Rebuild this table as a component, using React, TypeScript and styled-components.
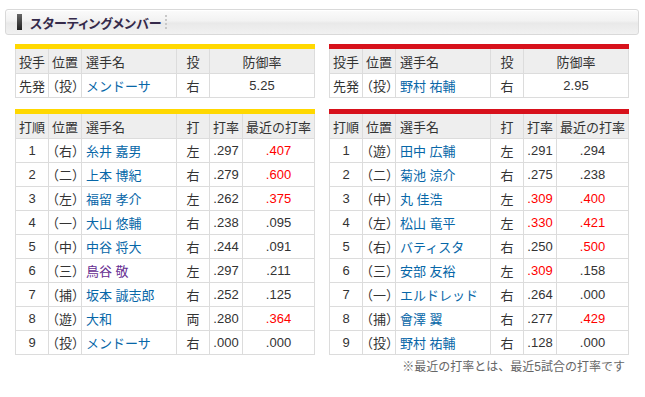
import { styled, createGlobalStyle } from "styled-components";

type Batter = {
  order: number;
  pos: string;
  name: string;
  hand: string;
  avg: string;
  recent: string;
  avgHot?: boolean;
  recentHot?: boolean;
  visited?: boolean;
};

type Team = {
  color: string;
  pitcher: { name: string; hand: string; era: string };
  lineup: Batter[];
};

const tigers: Team = {
  color: "#ffd800",
  pitcher: { name: "メンドーサ", hand: "右", era: "5.25" },
  lineup: [
    { order: 1, pos: "右", name: "糸井 嘉男", hand: "左", avg: ".297", recent: ".407", recentHot: true },
    { order: 2, pos: "二", name: "上本 博紀", hand: "右", avg: ".279", recent: ".600", recentHot: true },
    { order: 3, pos: "左", name: "福留 孝介", hand: "左", avg: ".262", recent: ".375", recentHot: true },
    { order: 4, pos: "一", name: "大山 悠輔", hand: "右", avg: ".238", recent: ".095" },
    { order: 5, pos: "中", name: "中谷 将大", hand: "右", avg: ".244", recent: ".091" },
    { order: 6, pos: "三", name: "鳥谷 敬", hand: "左", avg: ".297", recent: ".211", visited: true },
    { order: 7, pos: "捕", name: "坂本 誠志郎", hand: "右", avg: ".252", recent: ".125" },
    { order: 8, pos: "遊", name: "大和", hand: "両", avg: ".280", recent: ".364", recentHot: true },
    { order: 9, pos: "投", name: "メンドーサ", hand: "右", avg: ".000", recent: ".000" },
  ],
};

const carp: Team = {
  color: "#d7111b",
  pitcher: { name: "野村 祐輔", hand: "右", era: "2.95" },
  lineup: [
    { order: 1, pos: "遊", name: "田中 広輔", hand: "左", avg: ".291", recent: ".294" },
    { order: 2, pos: "二", name: "菊池 涼介", hand: "右", avg: ".275", recent: ".238" },
    { order: 3, pos: "中", name: "丸 佳浩", hand: "左", avg: ".309", recent: ".400", avgHot: true, recentHot: true },
    { order: 4, pos: "左", name: "松山 竜平", hand: "左", avg: ".330", recent: ".421", avgHot: true, recentHot: true },
    { order: 5, pos: "右", name: "バティスタ", hand: "右", avg: ".250", recent: ".500", recentHot: true },
    { order: 6, pos: "三", name: "安部 友裕", hand: "左", avg: ".309", recent: ".158", avgHot: true },
    { order: 7, pos: "一", name: "エルドレッド", hand: "右", avg: ".264", recent: ".000" },
    { order: 8, pos: "捕", name: "會澤 翼", hand: "右", avg: ".277", recent: ".429", recentHot: true },
    { order: 9, pos: "投", name: "野村 祐輔", hand: "右", avg: ".128", recent: ".000" },
  ],
};

const GlobalStyle = createGlobalStyle`
  body {
    margin: 0;
    background: #fff;
    font-family: "Liberation Sans", "Noto Sans CJK JP", sans-serif;
    color: #333;
  }
`;

const Page = styled.div`
  width: 634px;
  padding: 9px 0 0 5px;
`;

const TitleBar = styled.div`
  display: flex;
  align-items: center;
  height: 24px;
  border: 1px solid #d9d9d9;
  border-radius: 3px;
  box-shadow: inset 0 1px 0 #fff;
  background: linear-gradient(#fbfbfb 0%, #f2f2f2 45%, #e9e9e9 55%, #f1f1f1 100%);
`;

const TitleMark = styled.span`
  width: 5px;
  height: 16px;
  margin-left: 11px;
  background: linear-gradient(#666, #222);
`;

const TitleText = styled.h2`
  margin: 0 0 0 8px;
  font-size: 13px;
  font-weight: bold;
  color: #34294a;
  font-feature-settings: "palt";
`;

const TitleDots = styled.span`
  height: 14px;
  margin-left: 4px;
  border-left: 2px dotted #c8c8c8;
`;

const Columns = styled.div`
  display: grid;
  grid-template-columns: 300px 300px;
  column-gap: 14px;
  padding: 9px 10px 0;
`;

const TeamColumn = styled.div`
  display: flex;
  flex-direction: column;
  gap: 11px;
`;

const TableWrap = styled.div<{ $color: string }>`
  border-top: 5px solid ${(p) => p.$color};
`;

const Table = styled.table`
  width: 300px;
  table-layout: fixed;
  border-collapse: separate;
  border-spacing: 0;
  font-size: 13px;
`;

const Th = styled.th<{ $left?: boolean }>`
  padding: 0 ${(p) => (p.$left ? "4px" : "0")};
  height: 24px;
  background: #eeeeee;
  font-weight: normal;
  text-align: ${(p) => (p.$left ? "left" : "center")};
  border-right: 1px solid #dcdcdc;
  border-bottom: 1px solid #dcdcdc;
  white-space: nowrap;
  &:first-child {
    border-left: 1px solid #dcdcdc;
  }
`;

const Td = styled.td<{ $left?: boolean; $hot?: boolean }>`
  padding: 0 ${(p) => (p.$left ? "4px" : "0")};
  height: 23px;
  text-align: ${(p) => (p.$left ? "left" : "center")};
  color: ${(p) => (p.$hot ? "#ff0000" : "#333")};
  border-right: 1px solid #dcdcdc;
  border-bottom: 1px solid #dcdcdc;
  white-space: nowrap;
  &:first-child {
    border-left: 1px solid #dcdcdc;
  }
`;

const PosCell = styled(Td)`
  padding-left: 3px;
  font-feature-settings: "palt";
  letter-spacing: 0.5px;
`;

const PlayerLink = styled.a<{ $visited?: boolean }>`
  color: ${(p) => (p.$visited ? "#662d91" : "#0767a8")};
  text-decoration: none;
`;

const Note = styled.p`
  grid-column: 1 / -1;
  margin: 4px 4px 0 0;
  font-size: 12px;
  line-height: 16px;
  color: #666;
  text-align: right;
`;

function PitcherTable({ team }: { team: Team }) {
  return (
    <TableWrap $color={team.color}>
      <Table>
        <colgroup>
          <col style={{ width: 34 }} />
          <col style={{ width: 33 }} />
          <col style={{ width: 95 }} />
          <col style={{ width: 33 }} />
          <col style={{ width: 105 }} />
        </colgroup>
        <thead>
          <tr>
            <Th>投手</Th>
            <Th>位置</Th>
            <Th $left>選手名</Th>
            <Th>投</Th>
            <Th>防御率</Th>
          </tr>
        </thead>
        <tbody>
          <tr>
            <Td>先発</Td>
            <PosCell $left>（投）</PosCell>
            <Td $left>
              <PlayerLink href="#">{team.pitcher.name}</PlayerLink>
            </Td>
            <Td>{team.pitcher.hand}</Td>
            <Td>{team.pitcher.era}</Td>
          </tr>
        </tbody>
      </Table>
    </TableWrap>
  );
}

function LineupTable({ team }: { team: Team }) {
  return (
    <TableWrap $color={team.color}>
      <Table>
        <colgroup>
          <col style={{ width: 34 }} />
          <col style={{ width: 33 }} />
          <col style={{ width: 95 }} />
          <col style={{ width: 33 }} />
          <col style={{ width: 33 }} />
          <col style={{ width: 72 }} />
        </colgroup>
        <thead>
          <tr>
            <Th>打順</Th>
            <Th>位置</Th>
            <Th $left>選手名</Th>
            <Th>打</Th>
            <Th>打率</Th>
            <Th>最近の打率</Th>
          </tr>
        </thead>
        <tbody>
          {team.lineup.map((b) => (
            <tr key={b.order}>
              <Td>{b.order}</Td>
              <PosCell $left>（{b.pos}）</PosCell>
              <Td $left>
                <PlayerLink href="#" $visited={b.visited}>
                  {b.name}
                </PlayerLink>
              </Td>
              <Td>{b.hand}</Td>
              <Td $hot={b.avgHot}>{b.avg}</Td>
              <Td $hot={b.recentHot}>{b.recent}</Td>
            </tr>
          ))}
        </tbody>
      </Table>
    </TableWrap>
  );
}

export default function App() {
  return (
    <>
      <GlobalStyle />
      <Page>
        <TitleBar>
          <TitleMark />
          <TitleText>スターティングメンバー</TitleText>
          <TitleDots />
        </TitleBar>
        <Columns>
          {[tigers, carp].map((team) => (
            <TeamColumn key={team.color}>
              <PitcherTable team={team} />
              <LineupTable team={team} />
            </TeamColumn>
          ))}
          <Note>※最近の打率とは、最近5試合の打率です</Note>
        </Columns>
      </Page>
    </>
  );
}
